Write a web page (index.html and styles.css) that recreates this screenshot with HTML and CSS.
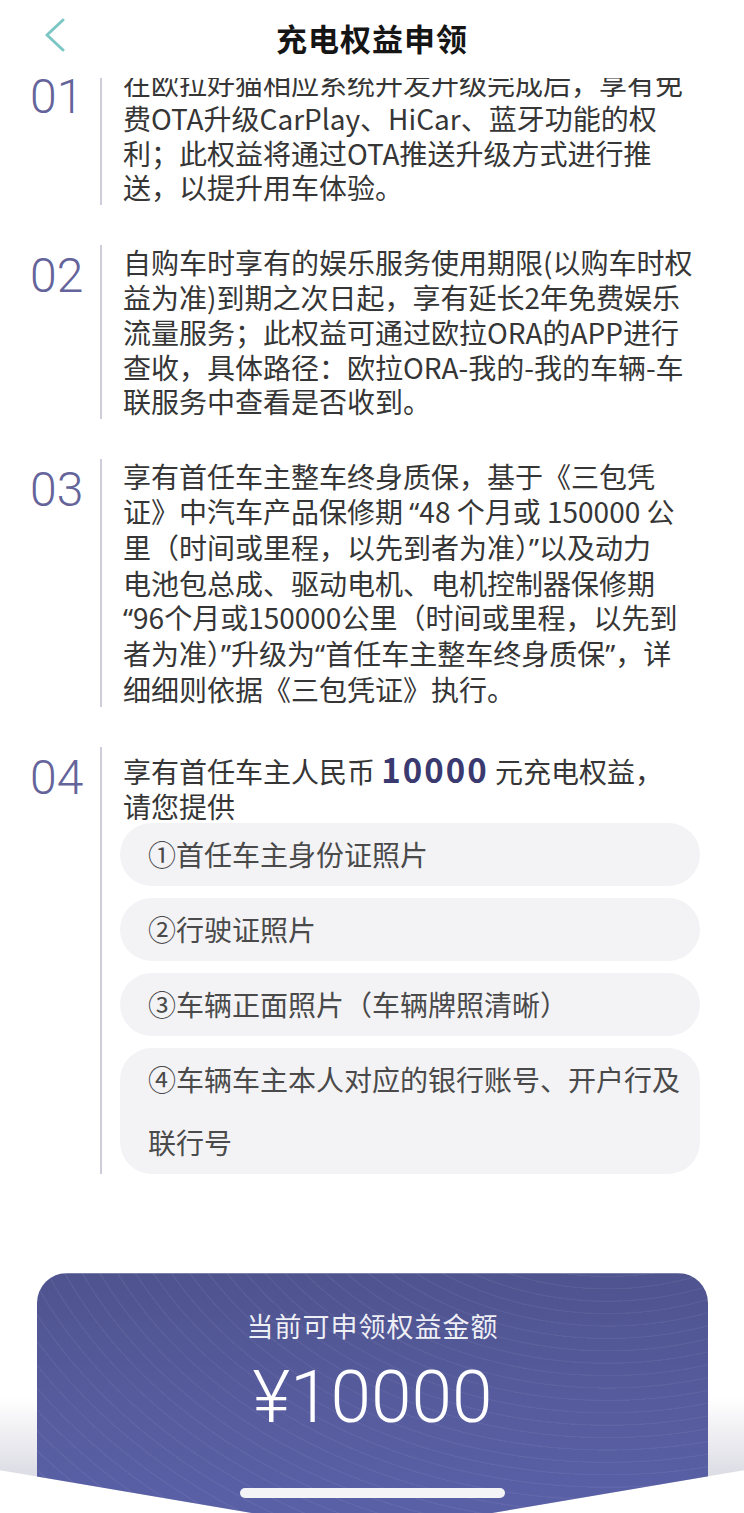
FILE: index.html
```html
<!DOCTYPE html>
<html lang="zh-CN">
<head>
    <meta charset="UTF-8">
    <meta name="viewport" content="width=device-width, initial-scale=1.0">
    <title>充电权益申领</title>
    <link rel="stylesheet" href="styles.css">
</head>
<body>
    <header class="topbar">
        <a class="back" href="#">
            <svg width="22" height="34" viewBox="0 0 22 34"><polyline points="19,2 3,17 19,32" fill="none" stroke="#7cc7c5" stroke-width="3" stroke-linecap="round" stroke-linejoin="round"/></svg>
        </a>
        <h1 class="title">充电权益申领</h1>
    </header>

    <main class="content">
        <ol class="benefits">
            <li class="benefit">
                <span class="benefit-no">01</span>
                <div class="benefit-body">
                    <p>在欧拉好猫相应系统开发升级完成后，享有免<br>费OTA升级CarPlay、HiCar、蓝牙功能的权<br>利；此权益将通过OTA推送升级方式进行推<br>送，以提升用车体验。</p>
                </div>
            </li>
            <li class="benefit">
                <span class="benefit-no">02</span>
                <div class="benefit-body">
                    <p>自购车时享有的娱乐服务使用期限(以购车时权<br>益为准)到期之次日起，享有延长2年免费娱乐<br>流量服务；此权益可通过欧拉ORA的APP进行<br>查收，具体路径：欧拉ORA-我的-我的车辆-车<br>联服务中查看是否收到。</p>
                </div>
            </li>
            <li class="benefit">
                <span class="benefit-no">03</span>
                <div class="benefit-body">
                    <p>享有首任车主整车终身质保，基于《三包凭<br>证》中汽车产品保修期 <span class="q">“</span>48 个月或 150000 公<br>里（时间或里程，以先到者为准）<span class="q">”</span>以及动力<br>电池包总成、驱动电机、电机控制器保修期<br><span class="q">“</span>96个月或150000公里（时间或里程，以先到<br>者为准）<span class="q">”</span>升级为<span class="q">“</span>首任车主整车终身质保<span class="q">”</span>，详<br>细细则依据《三包凭证》执行。</p>
                </div>
            </li>
            <li class="benefit">
                <span class="benefit-no">04</span>
                <div class="benefit-body">
                    <p class="benefit-lead">享有首任车主人民币 <strong class="hl">10000</strong> 元充电权益，<br>请您提供</p>
                    <ul class="docs">
                        <li class="doc">①首任车主身份证照片</li>
                        <li class="doc">②行驶证照片</li>
                        <li class="doc">③车辆正面照片（车辆牌照清晰）</li>
                        <li class="doc">④车辆车主本人对应的银行账号、开户行及联行号</li>
                    </ul>
                </div>
            </li>
        </ol>
    </main>

    <section class="claim">
        <div class="claim-card">
            <div class="claim-label">当前可申领权益金额</div>
            <div class="claim-amount">¥10000</div>
        </div>
    </section>

    <div class="home-bar"></div>
</body>
</html>
```

FILE: styles.css
```css
html, body { margin: 0; height: 100%; overflow: hidden; }
body { background: #fff; font-family: "Noto Sans CJK SC", "Noto Sans", sans-serif; color: #363636; }

.topbar { height: 78px; display: grid; grid-template-columns: 1fr auto 1fr; align-items: center; padding: 0 44px 4px; box-sizing: border-box; background: #fff; }
.back { align-self: start; margin-top: 18px; width: 22px; height: 34px; display: block; }
.title { margin: 0; font-size: 31px; font-weight: 700; color: #151515; letter-spacing: 1px; }

.content { overflow: hidden; }
.benefits { list-style: none; margin: -12px 0 0; padding: 0 44px 0 30px; display: flex; flex-direction: column; gap: 40px; }
.benefit { display: flex; }
.benefit-no { width: 70px; flex: none; padding-top: 7px; font-family: Roboto, "Liberation Sans", sans-serif; font-weight: 300; font-size: 48px; line-height: 1; color: #64649a; }
.benefit-body { flex: 1; border-left: 2px solid #cdcdda; padding-left: 21px; }
.benefit-body p { margin: 0; font-size: 28px; line-height: 34.8px; }
.q { font-family: "Noto Sans", "Liberation Sans", sans-serif; }
.benefit-lead { padding-top: 5px; }
.hl { font-size: 33px; font-weight: 700; letter-spacing: 2px; color: #3a3a70; }

.docs { list-style: none; margin: 0 0 0 -3px; padding: 0; display: flex; flex-direction: column; gap: 12px; }
.doc { background: #f3f3f6; border-radius: 32px; padding: 0 14px 0 28px; font-size: 28px; line-height: 63px; color: #4a4a4a; }

.claim { margin-top: 99px; height: 260px; padding: 0 36px 0 37px; box-sizing: border-box; clip-path: polygon(0 0, 100% 0, 100% 197px, 50% 100%, 0 197px); background: linear-gradient(180deg, #fff 0, #fff 48%, #dedee6 76%, #d8d8e0 100%); }
.claim-card { height: 100%; box-sizing: border-box; padding-top: 35px; border-radius: 30px 30px 0 0; text-align: center; color: #fff;
    background: repeating-radial-gradient(ellipse at 85% -70%, rgba(255,255,255,0) 0 14px, rgba(255,255,255,.05) 15px 16px),
                linear-gradient(180deg, #4f548f 0%, #565c9e 55%, #5b61a8 100%); }
.claim-label { font-size: 27px; line-height: 35px; letter-spacing: 1px; color: rgba(255,255,255,.92); }
.claim-amount { margin-top: 18px; font-family: Roboto, "Liberation Sans", sans-serif; font-weight: 300; font-size: 73px; line-height: 1; }

.home-bar { position: fixed; left: 50%; bottom: 15px; width: 265px; height: 10px; margin-left: -132px; border-radius: 5px; background: #f4f4f7; }
```
